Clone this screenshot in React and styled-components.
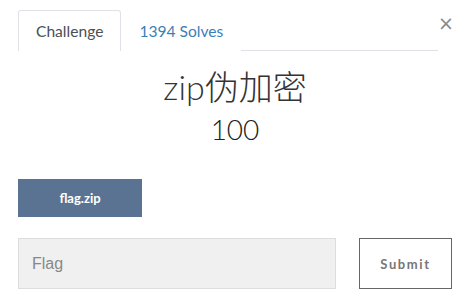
import React from 'react'
import styled, { createGlobalStyle } from 'styled-components'

const Global = createGlobalStyle`
body{
  margin:0;
  background:#fff;
  font-family: Lato, "Noto Sans CJK SC", sans-serif;
}
`

function App() {
  return (
    <Modal>
      <Global />
      <Header>
        <Tabs>
          <Tab active>Challenge</Tab>
          <Tab>1394 Solves</Tab>
        </Tabs>
        <Close>×</Close>
      </Header>
      <Title>zip伪加密</Title>
      <Value>100</Value>
      <FileButton>flag.zip</FileButton>
      <SubmitRow>
        <FlagInput placeholder='Flag' />
        <SubmitButton>Submit</SubmitButton>
      </SubmitRow>
    </Modal>
  )
}

export default App

const Modal=styled.div`
width:460px;
height:306px;
box-sizing:border-box;
padding:10px 8px 0 18px;
display:flex;
flex-direction:column;
`
const Header=styled.div`
display:flex;
align-items:flex-start;
`
const Tabs=styled.div`
flex:1;
display:flex;
height:41px;
box-sizing:border-box;
border-bottom:1px solid #dee2e6;
`
const Tab=styled.div`
display:flex;
align-items:center;
box-sizing:border-box;
height:41px;
padding:0 17px;
font-size:15.6px;
color:${p => p.active ? '#495057' : '#3b7fb6'};
background:#fff;
border:1px solid ${p => p.active ? '#dee2e6' : 'transparent'};
border-bottom:none;
border-radius:3px 3px 0 0;
`
const Close=styled.div`
width:14px;
margin-top:3px;
text-align:right;
font-family:"DejaVu Sans", sans-serif;
font-size:19px;
line-height:20px;
color:#888;
`
const Title=styled.h1`
margin:16px 0 0;
text-align:center;
font-weight:300;
font-size:34px;
line-height:40px;
color:#333;
`
const Value=styled.div`
margin-top:5px;
text-align:center;
font-weight:300;
font-size:28px;
line-height:34px;
color:#222;
`
const FileButton=styled.button`
margin-top:33px;
width:124px;
height:38px;
border:none;
background:#5b7392;
color:#fff;
font-family:Lato, sans-serif;
font-weight:700;
font-size:13px;
`
const SubmitRow=styled.div`
margin-top:21px;
display:flex;
gap:23px;
`
const FlagInput=styled.input`
width:318px;
height:51px;
box-sizing:border-box;
background:#f0f0f0;
border:1px solid #ddd;
padding:0 13px;
font-family:"Liberation Sans", Arial, sans-serif;
font-size:16px;
color:#555;
&::placeholder{ color:#888; }
`
const SubmitButton=styled.button`
width:93px;
height:51px;
box-sizing:border-box;
background:#fff;
border:1px solid #666;
font-family:Lato, sans-serif;
font-weight:700;
font-size:13px;
letter-spacing:1.6px;
color:#777;
`
